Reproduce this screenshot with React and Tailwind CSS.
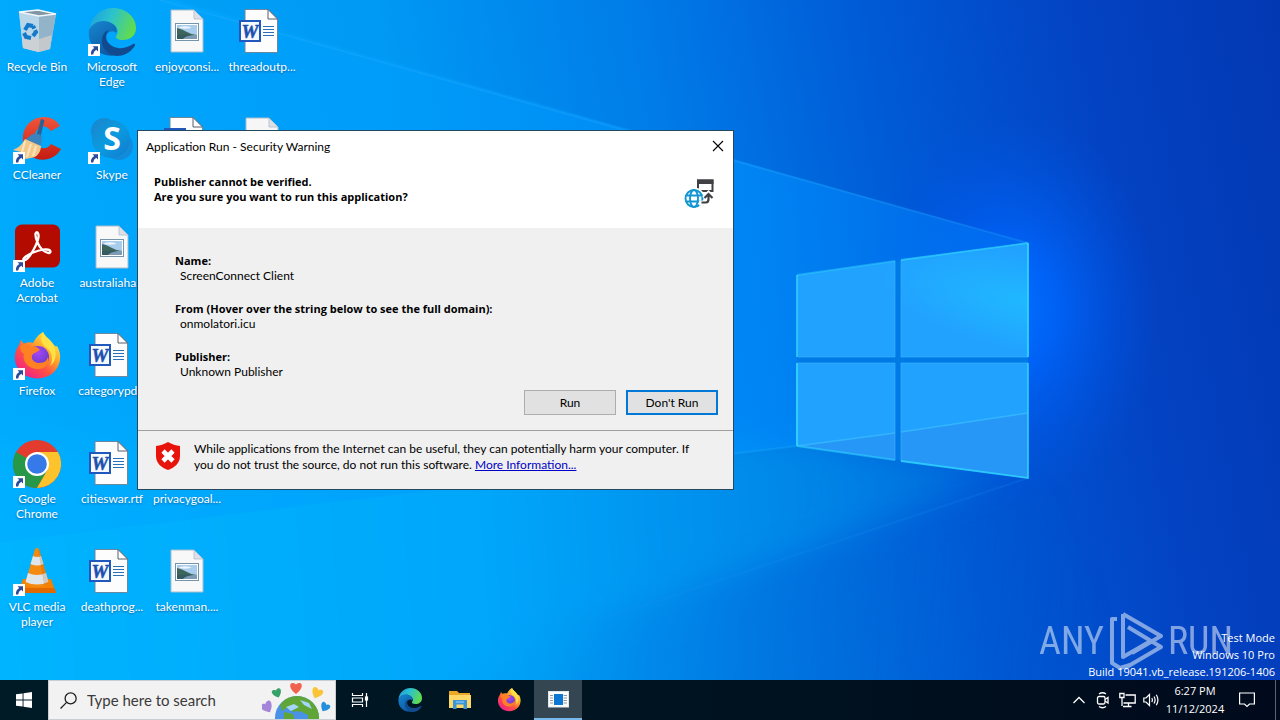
import React from "react";

function Wallpaper() {
  return (
    <svg
      className="absolute inset-0 h-full w-full"
      viewBox="0 0 1280 680"
      preserveAspectRatio="xMidYMid slice"
      aria-hidden="true"
    >
      <defs>
        <linearGradient id="sky" x1="0" y1="0.1" x2="1" y2="0">
          <stop offset="0" stopColor="#00a6f8" />
          <stop offset="0.3" stopColor="#0099f4" />
          <stop offset="0.5" stopColor="#007ce8" />
          <stop offset="0.68" stopColor="#005ad6" />
          <stop offset="0.85" stopColor="#0342c2" />
          <stop offset="1" stopColor="#0338b2" />
        </linearGradient>
        <linearGradient id="beam" gradientUnits="userSpaceOnUse" x1="0" y1="0" x2="1028" y2="0">
          <stop offset="0" stopColor="#00acff" />
          <stop offset="0.5" stopColor="#009afc" />
          <stop offset="0.75" stopColor="#0090ff" />
          <stop offset="1" stopColor="#0070f0" />
        </linearGradient>
        <linearGradient id="floor" gradientUnits="userSpaceOnUse" x1="0" y1="600" x2="1100" y2="520">
          <stop offset="0" stopColor="#00b4ff" />
          <stop offset="0.45" stopColor="#00a6fa" />
          <stop offset="0.75" stopColor="#0084e6" />
          <stop offset="1" stopColor="#0062d6" stopOpacity="0.6" />
        </linearGradient>
        <linearGradient id="dusk" gradientUnits="userSpaceOnUse" x1="300" y1="560" x2="1100" y2="620">
          <stop offset="0" stopColor="#00b0ff" />
          <stop offset="0.3" stopColor="#009ef4" />
          <stop offset="0.6" stopColor="#0074de" />
          <stop offset="1" stopColor="#0048c4" stopOpacity="0" />
        </linearGradient>
        <radialGradient
          id="glow"
          gradientUnits="userSpaceOnUse"
          cx="0"
          cy="0"
          r="1"
          gradientTransform="translate(1010 310) scale(150 200)"
        >
          <stop offset="0" stopColor="#0070ff" />
          <stop offset="0.3" stopColor="#0064fa" stopOpacity="0.9" />
          <stop offset="1" stopColor="#0050e0" stopOpacity="0" />
        </radialGradient>
        <radialGradient
          id="pane"
          gradientUnits="userSpaceOnUse"
          cx="0"
          cy="0"
          r="1"
          gradientTransform="translate(1028 303) rotate(12) scale(150 50)"
        >
          <stop offset="0" stopColor="#20b8ff" />
          <stop offset="1" stopColor="#21a2ff" />
        </radialGradient>
        <filter id="soft" x="-15%" y="-25%" width="130%" height="150%">
          <feGaussianBlur stdDeviation="16" />
        </filter>
      </defs>
      <rect width="1280" height="680" fill="url(#sky)" />
      <rect width="1280" height="680" fill="url(#glow)" />
      <path d="M-80 440 L797 440 L1010 470 L600 640 L480 780 L-80 780Z" fill="url(#floor)" filter="url(#soft)" />
      <path d="M1028 490 L560 625 L300 780 L1200 780Z" fill="url(#dusk)" opacity="0.75" filter="url(#soft)" />
      <path d="M-20 -20 L140 -10 L1028 243 L1028 478 L797 446 L-20 545Z" fill="url(#beam)" opacity="0.6" />
      <path d="M160 0 L1028 243" stroke="#35b4ff" strokeWidth="2" opacity="0.22" />
      <path d="M560 474 L797 446" stroke="#2cc4ff" strokeWidth="2" opacity="0.2" />
      <path d="M1028 478 L600 620" stroke="#2090f0" strokeWidth="2" opacity="0.18" />
      <path d="M797 275 L1028 243 L1028 478 L797 446Z" fill="#007ae6" />
      <g fill="url(#pane)">
        <path d="M797 275 L895 261 L895 357 L797 357Z" />
        <path d="M901 260 L1028 243 L1028 357 L901 357Z" />
        <path d="M797 363 L895 363 L895 460 L797 446Z" />
        <path d="M901 363 L1028 363 L1028 478 L901 461Z" />
      </g>
      <path d="M797 446 L895 433 L895 460Z M901 432 L1028 413 L1028 478 L901 461Z" fill="#2a90f2" opacity="0.6" />
      <path d="M797 446 L895 433 M901 432 L1028 413" stroke="#3fc4ff" strokeWidth="1.5" opacity="0.6" />
      <g fill="none" stroke="#3fb4ff" strokeWidth="1" opacity="0.6">
        <path d="M895 261 V357 H798 M901 260 V357 H1028 M797 363 H895 V460 M1028 363 H901 V461" />
      </g>
      <g fill="none" stroke="#30d4ff" strokeWidth="1.8">
        <path d="M895 261 L797 275" opacity="0.45" />
        <path d="M797 275 V357" opacity="0.85" />
        <path d="M901 260 L1028 243" opacity="0.7" />
        <path d="M1028 243 V357 M797 363 V446" />
        <path d="M797 446 L895 460" opacity="0.55" />
        <path d="M1028 363 V478 L901 461" opacity="0.85" />
      </g>
    </svg>
  );
}

function ShortcutArrow() {
  return (
    <svg className="absolute bottom-0 left-0 h-3 w-3" viewBox="0 0 12 12" aria-hidden="true">
      <rect width="12" height="12" fill="#fff" />
      <path d="M4.5 2.2 H10 V7.6 L8.2 5.8 Q5.4 7.2 5.2 10.6 H3 Q2.4 6.2 6.3 4Z" fill="#2a4b9b" />
    </svg>
  );
}

function RecycleBin() {
  return (
    <svg viewBox="0 0 48 48" className="h-12 w-12" aria-hidden="true">
      <path d="M6 4 L25 2 L43 6 L37 41 L25 44 L10 40Z" fill="#b4cfe0" />
      <path d="M6 4 L26 7 L26 44 L10 40Z" fill="#b9d6e9" />
      <path d="M26 7 L43 6 L37 41 L26 44Z" fill="#93b3c8" />
      <path d="M9 27 L26 31 L39 27 L37 41 L26 44 L10 40Z" fill="#d2cfcd" opacity="0.75" />
      <path d="M6 4 L25 2 L43 6 L26 8Z" fill="#8096a5" stroke="#eef6fa" strokeWidth="1.3" />
      <g fill="none" stroke="#1479c9" strokeWidth="4">
        <path d="M12 22 L15 17 L20 18" />
        <path d="M20 18 L23 24 L20 28" strokeDasharray="3 1.500 20" />
        <path d="M18 30 L13 29 L11 25" />
      </g>
    </svg>
  );
}

function EdgeLogo({ className }) {
  return (
    <svg viewBox="0 0 48 48" className={className} aria-hidden="true">
      <defs>
        <linearGradient id="edgeTop" x1="0" y1="0.2" x2="1" y2="0.5">
          <stop offset="0" stopColor="#1c9fe0" />
          <stop offset="0.45" stopColor="#2bc3cd" />
          <stop offset="1" stopColor="#62dc4c" />
        </linearGradient>
        <linearGradient id="edgeLeft" x1="0" y1="0" x2="0.6" y2="1">
          <stop offset="0" stopColor="#1686cf" />
          <stop offset="1" stopColor="#0c59a4" />
        </linearGradient>
      </defs>
      <path d="M1 22 C3 8 13 0 25 0 C38 0 48 9 48 20 C48 28 42 32 35 32 C30 32 27 30 28 28 C31 25 30 20 26 17 C19 11 7 13 1 22Z" fill="url(#edgeTop)" />
      <path d="M1 22 C5 13 17 10 25 16 C28 18 30 22 28 25 C25 21 17 24 17 32 C17 40 24 47 33 46 C16 52 -1 41 1 22Z" fill="url(#edgeLeft)" />
      <path d="M21 22 C15 29 19 38 30 40 C36 41 42 38 45 36 C47 35 48 37 46 39 C42 45 35 48 29 48 C19 47 13 39 14 32 C14 27 17 23 21 22Z" fill="#124a8f" />
    </svg>
  );
}

function PictureFile() {
  return (
    <svg viewBox="0 0 48 48" className="h-12 w-12" aria-hidden="true">
      <path d="M8 2 H31 L40 11 V44 H8Z" fill="#f8f8f9" stroke="#a9bccb" strokeWidth="1" />
      <path d="M31 2 V11 H40Z" fill="#dde0e8" stroke="#b4bcc8" strokeWidth="0.8" />
      <rect x="12.5" y="15.5" width="23" height="17" fill="#fff" stroke="#7494ab" />
      <rect x="14" y="17" width="20" height="14" fill="#a8cdec" />
      <path d="M14 20 Q19 21 24 24 T34 27 V28 H14Z" fill="#3e655c" />
      <path d="M14 27 L34 27 V31 H14Z" fill="#7c9cb4" />
      <path d="M14 27 Q22 26 30 27 Q22 28 20 31 H14Z" fill="#345c60" />
      <ellipse cx="22" cy="19.5" rx="6" ry="1.2" fill="#fff" opacity="0.8" />
    </svg>
  );
}

function BlankFile() {
  return (
    <svg viewBox="0 0 48 48" className="h-12 w-12" aria-hidden="true">
      <path d="M8 2 H31 L40 11 V44 H8Z" fill="#f6f6f7" stroke="#a9bccb" />
      <path d="M31 2 V11 H40Z" fill="#dde0e8" stroke="#b4bcc8" strokeWidth="0.8" />
    </svg>
  );
}

function WordFile() {
  return (
    <svg viewBox="0 0 48 48" className="h-12 w-12" aria-hidden="true">
      <path d="M7 1.500 H30 L39.500 11 V44.500 H7Z" fill="#fdfdfd" stroke="#6c87a0" strokeWidth="1" />
      <path d="M30 1.500 V11 H39.500Z" fill="#fff" stroke="#54606c" strokeWidth="1" />
      <path d="M25 18.500 H36 M25 21.500 H36 M25 24.500 H36 M25 27.500 H36" stroke="#2a6fb8" strokeWidth="1.2" />
      <rect x="1" y="12" width="22" height="22" fill="#2058be" />
      <rect x="3" y="14" width="18" height="18" fill="#f5f8fd" />
      <text x="12" y="29.500" textAnchor="middle" fontFamily="'Liberation Serif', serif" fontWeight="700" fontStyle="italic" fontSize="19" fill="#1c4fae" stroke="#1c4fae" strokeWidth="0.5">
        W
      </text>
    </svg>
  );
}

function CCleanerLogo() {
  return (
    <svg viewBox="0 0 48 48" className="h-12 w-12" aria-hidden="true">
      <defs>
        <linearGradient id="ccRed" x1="0" y1="0" x2="0" y2="1">
          <stop offset="0" stopColor="#f0553b" />
          <stop offset="1" stopColor="#c41b12" />
        </linearGradient>
      </defs>
      <path d="M47 10 C41 -1 25 -2 16 7 C7 16 8 33 18 40 C27 47 42 44 48 33 L38 28 C35 33 28 34 24 29 C20 24 21 16 26 12 C31 9 35 11 38 15Z" fill="url(#ccRed)" />
      <path d="M28 3 L31.500 4 L27 23 L23 21Z" fill="#2a6294" />
      <path d="M18 19 Q24 16 29 20 L28 30 L12 24Z" fill="#3b83bd" />
      <path d="M12 23 L28 30 Q28 37 22 41 L13 43 Q8 41 8 36 L0 34 Q8 31 12 23Z" fill="#f3c98b" />
      <path d="M12 25 L9 36 M18 28 L14 41 M23 30 L20 40" stroke="#fae6c0" strokeWidth="2" />
    </svg>
  );
}

function SkypeLogo() {
  return (
    <svg viewBox="0 0 48 48" className="h-12 w-12" aria-hidden="true">
      <defs>
        <linearGradient id="skype" x1="0" y1="0" x2="1" y2="1">
          <stop offset="0" stopColor="#1a86cc" />
          <stop offset="0.5" stopColor="#0a9be0" />
          <stop offset="1" stopColor="#1279cc" />
        </linearGradient>
      </defs>
      <circle cx="16" cy="15" r="13" fill="#168ad2" />
      <circle cx="31" cy="30" r="14" fill="#118bda" />
      <circle cx="23" cy="23" r="19" fill="url(#skype)" />
      <text x="24" y="34" textAnchor="middle" fontFamily="'Open Sans', sans-serif" fontWeight="700" fontSize="32" fill="#fff">
        S
      </text>
    </svg>
  );
}

function AcrobatLogo() {
  return (
    <svg viewBox="0 0 48 48" className="h-12 w-12" aria-hidden="true">
      <rect x="2" y="0.500" width="45" height="43" rx="7" fill="#b30b00" />
      <path
        d="M11 34 C14 31 21 28 26 26.500 C31 25 37 25 37.500 27.500 C37.500 30.500 32 28.500 29 25.500 C25 21.500 22 13 22.500 9.500 C23.500 6.500 26 9 25.500 13 C24.500 20 18 31 14.500 34.500 C12 37 9 36 11 34Z"
        fill="none"
        stroke="#fff"
        strokeWidth="2.300"
        strokeLinejoin="round"
      />
    </svg>
  );
}

function FirefoxLogo({ className }) {
  return (
    <svg viewBox="0 0 48 48" className={className} aria-hidden="true">
      <defs>
        <linearGradient id="fxBody" x1="0.9" y1="0.1" x2="0.2" y2="0.95">
          <stop offset="0" stopColor="#fff44f" />
          <stop offset="0.35" stopColor="#ffa52a" />
          <stop offset="0.65" stopColor="#ff4f44" />
          <stop offset="1" stopColor="#f0208c" />
        </linearGradient>
        <radialGradient id="fxGlobe" cx="0.5" cy="0.3" r="0.7">
          <stop offset="0" stopColor="#a746f4" />
          <stop offset="1" stopColor="#5b3bc6" />
        </radialGradient>
      </defs>
      <path d="M30 0 C32 5 37 7 40 12 C42 14 43 15 44 14 C49 22 48 32 42 39 C34 48 18 49 9 41 C0 33 0 21 6 13 L8 8 L11 12 C14 10 17 10 20 11 C22 7 26 2 30 0Z" fill="url(#fxBody)" />
      <circle cx="25" cy="25" r="11" fill="url(#fxGlobe)" />
      <path d="M7 15 C10 10 15 10 18 15 C20 14 24 14 27 18 L20 22 C17 25 20 31 26 31 C32 31 34 28 35 25 C37 33 30 38 23 37 C14 36 9 28 11 22 C8 20 7 18 7 15Z" fill="#ff8124" />
      <path d="M30 0 C26 7 29 13 34 16 C40 21 40 29 37 34 C44 29 44 20 40 12 C37 7 32 5 30 0Z" fill="#ffe045" />
    </svg>
  );
}

function ChromeLogo() {
  return (
    <svg viewBox="0 0 48 48" className="h-12 w-12" aria-hidden="true">
      <circle cx="24" cy="24" r="24" fill="#e33b2e" />
      <path d="M24 24 L3.200 12 A24 24 0 0 0 24 48 L34.400 30Z" fill="#279847" />
      <path d="M24 12 H44.900 A24 24 0 0 1 24 48 L34.400 30Z" fill="#fcc32c" />
      <circle cx="24" cy="24" r="12" fill="#fff" />
      <circle cx="24" cy="24" r="9.800" fill="#3679e8" />
    </svg>
  );
}

function VlcLogo() {
  return (
    <svg viewBox="0 0 48 48" className="h-12 w-12" aria-hidden="true">
      <path d="M10 31 H38 L43 45 H5Z" fill="#f48200" />
      <path d="M5 45 L7 40 H41.500 L43 45Z" fill="#e06a00" />
      <path d="M22 1 Q24 -1 26 1 L36 36 Q24 43 12 36Z" fill="#f58a10" />
      <path d="M20 8 Q24 10 28 8 L30.500 16 Q24 19 17.500 16Z" fill="#dfe6e9" />
      <path d="M15 25 Q24 29 33 25 L35.500 34 Q24 39 12.500 34Z" fill="#dfe6e9" />
      <path d="M25 1 L31 37 L36 36 L26 1Z" fill="#b84d00" opacity="0.2" />
    </svg>
  );
}

const desktopRows = [
  [
    { label: "Recycle Bin", icon: <RecycleBin /> },
    { label: "Microsoft Edge", icon: <EdgeLogo className="h-12 w-12" />, shortcut: true },
    { label: "enjoyconsi...", icon: <PictureFile /> },
    { label: "threadoutp...", icon: <WordFile /> },
  ],
  [
    { label: "CCleaner", icon: <CCleanerLogo />, shortcut: true },
    { label: "Skype", icon: <SkypeLogo />, shortcut: true },
    { label: "", icon: <WordFile /> },
    { label: "", icon: <BlankFile /> },
  ],
  [
    { label: "Adobe Acrobat", icon: <AcrobatLogo />, shortcut: true },
    { label: "australiaha...", icon: <PictureFile /> },
    null,
    null,
  ],
  [
    { label: "Firefox", icon: <FirefoxLogo className="h-12 w-12" />, shortcut: true },
    { label: "categorypd...", icon: <WordFile /> },
    null,
    null,
  ],
  [
    { label: "Google Chrome", icon: <ChromeLogo />, shortcut: true },
    { label: "citieswar.rtf", icon: <WordFile /> },
    { label: "privacygoal...", icon: <BlankFile /> },
    null,
  ],
  [
    { label: "VLC media player", icon: <VlcLogo />, shortcut: true },
    { label: "deathprog...", icon: <WordFile /> },
    { label: "takenman....", icon: <PictureFile /> },
    null,
  ],
];

function DesktopIcon({ item }) {
  return (
    <div className="flex h-[108px] flex-col items-center gap-[3px] pr-px pt-2">
      <div className="relative h-12 w-12">
        {item.icon}
        {item.shortcut && <ShortcutArrow />}
      </div>
      <span className="px-1 text-center text-[12px] leading-[15px] text-white [text-shadow:0_1px_2px_rgba(0,40,90,0.5)]">
        {item.label}
      </span>
    </div>
  );
}

function RunOnlineIcon() {
  return (
    <svg className="mt-1 h-8 w-8" viewBox="0 0 32 32" aria-hidden="true">
      <rect x="14" y="2.500" width="14.500" height="10.500" fill="#fff" stroke="#3f3f44" strokeWidth="2" />
      <path d="M13 1.500 H29.500 V6 H13Z" fill="#3f3f44" />
      <circle cx="10" cy="20.500" r="11" fill="#fff" />
      <g fill="none" stroke="#1295d3" strokeWidth="1.900">
        <circle cx="10" cy="20.500" r="8.500" />
        <ellipse cx="10" cy="20.500" rx="4" ry="8.500" />
        <path d="M2.500 17.500 H17.500 M2.500 23.500 H17.500" />
      </g>
      <path d="M15 25 H22 Q24.500 25 24.500 21 V17 M20 20 L24.500 15.500 L29 20" fill="none" stroke="#fff" strokeWidth="5" />
      <path d="M17.500 24.500 H22 Q24.500 24.500 24.500 21 V17 M20.500 20 L24.500 16 L28.500 20" fill="none" stroke="#3f3f44" strokeWidth="2.200" />
    </svg>
  );
}

function ShieldIcon() {
  return (
    <svg className="mt-[11px] h-7 w-6 shrink-0" viewBox="0 0 24 28" aria-hidden="true">
      <path d="M12 0 C16 2.500 20 3.500 24 4 V14 C24 21 19 25.500 12 28 C5 25.500 0 21 0 14 V4 C4 3.500 8 2.500 12 0Z" fill="#e8140c" />
      <path d="M7 9 L17 19 M17 9 L7 19" stroke="#fff" strokeWidth="4.600" />
    </svg>
  );
}

const details = [
  ["Name:", "ScreenConnect Client"],
  ["From (Hover over the string below to see the full domain):", "onmolatori.icu"],
  ["Publisher:", "Unknown Publisher"],
];

function SecurityDialog() {
  return (
    <section
      role="dialog"
      aria-labelledby="dialog-title"
      className="absolute left-[137px] top-[130px] w-[597px] border border-[#23485f] bg-[#f0f0f0] text-[12px] leading-[15px] text-black"
    >
      <div className="bg-white">
        <div className="flex h-[30px] items-center justify-between pl-2">
          <h1 id="dialog-title">Application Run - Security Warning</h1>
          <button type="button" aria-label="Close" className="flex h-7 w-[30px] items-center justify-center">
            <svg className="h-3 w-3" viewBox="0 0 12 12" aria-hidden="true">
              <path d="M1 1 L11 11 M11 1 L1 11" stroke="#000" strokeWidth="1.100" />
            </svg>
          </button>
        </div>
        <div className="flex h-[67px] items-start justify-between pl-4 pr-[17px] pt-[13px]">
          <p className="font-['Open_Sans','Noto_Sans',sans-serif] text-[11px] font-bold">
            Publisher cannot be verified.
            <br />
            Are you sure you want to run this application?
          </p>
          <RunOnlineIcon />
        </div>
      </div>
      <dl className="flex flex-col gap-[18px] pl-[37px] pt-[25px]">
        {details.map(([term, value]) => (
          <div key={term}>
            <dt className="font-['Open_Sans','Noto_Sans',sans-serif] text-[11px] font-bold">{term}</dt>
            <dd className="pl-[5px]">{value}</dd>
          </div>
        ))}
      </dl>
      <div className="flex justify-end gap-2.5 pb-[15px] pr-[15px] pt-[11px]">
        <button type="button" className="h-[25px] w-[92px] border border-[#adadad] bg-[#e1e1e1]">
          Run
        </button>
        <button type="button" className="h-[25px] w-[92px] border-2 border-[#0078d7] bg-[#e1e1e1]">
          Don't Run
        </button>
      </div>
      <div className="flex h-[59px] gap-[14px] border-t border-[#a0a0a0] pl-[18px] pr-7">
        <ShieldIcon />
        <p className="pt-2.5 leading-4">
          While applications from the Internet can be useful, they can potentially harm your computer. If
          <br />
          you do not trust the source, do not run this software.{" "}
          <a href="#more" className="text-[#0000c8] underline">
            More Information...
          </a>
        </p>
      </div>
    </section>
  );
}

function Watermark() {
  return (
    <div className="absolute bottom-[9px] right-[47px] flex items-center gap-1 text-white opacity-50">
      <span className="font-['Roboto_Condensed','Liberation_Sans_Narrow','Liberation_Sans',sans-serif] text-[38px] leading-[60px]">
        ANY
      </span>
      <svg className="h-[60px] w-14" viewBox="0 0 56 60" fill="none" stroke="currentColor" strokeWidth="4" strokeLinejoin="round" aria-hidden="true">
        <path d="M9 8 H4 V52 L12 57 L22 54" />
        <path d="M15 3 L53 25 L24 42" />
        <path d="M15 3 V46 L41 31" />
        <path d="M20 16 L53 36 L17 57" />
      </svg>
      <span className="font-['Roboto_Condensed','Liberation_Sans_Narrow','Liberation_Sans',sans-serif] text-[38px] leading-[60px]">
        RUN
      </span>
    </div>
  );
}

function SearchArt() {
  return (
    <svg className="h-[38px] w-[70px] shrink-0" viewBox="0 0 70 38" aria-hidden="true">
      <defs>
        <path id="heart" d="M0 6 C-7 1 -7 -5 -3.500 -5 C-1 -5 0 -3.500 0 -3 C0 -3.500 1 -5 3.500 -5 C7 -5 7 1 0 6Z" />
        <clipPath id="earth">
          <circle cx="35" cy="37" r="22" />
        </clipPath>
      </defs>
      <circle cx="35" cy="37" r="22" fill="#4a92e8" />
      <g clipPath="url(#earth)">
        <path d="M18 24 L26 15 L40 12 L50 19 L57 30 V40 H46 L42 35 L36 30 L31 31 L28 25 L20 30Z" fill="#5fa636" />
        <path d="M22 31 L31 33 L33 40 H22Z" fill="#5fa636" />
        <path d="M24 26 L32 23 L37 26 L29 30Z M38 19 L47 22 L50 28 L42 24Z" fill="#a5d6f7" />
        <path d="M38 30 L46 34 V40 H36Z" fill="#4a92e8" />
      </g>
      <use href="#heart" transform="translate(34 7)" fill="#f0624d" />
      <use href="#heart" transform="translate(15 12) rotate(-20) scale(0.800)" fill="#36a269" />
      <use href="#heart" transform="translate(55 12) rotate(25) scale(0.950)" fill="#fbc437" />
      <use href="#heart" transform="translate(5 26) rotate(-30)" fill="#a485d8" />
      <use href="#heart" transform="translate(63 26) rotate(30) scale(0.800)" fill="#2490dc" />
    </svg>
  );
}

function Taskbar() {
  return (
    <footer className="flex h-10 items-stretch bg-[linear-gradient(90deg,#001a26,#00121f_60%,#000a1c)] text-white">
      <button type="button" aria-label="Start" className="flex w-12 items-center justify-center">
        <svg className="h-4 w-4" viewBox="0 0 16 16" fill="#fff" aria-hidden="true">
          <path d="M0 2.300 L6.600 1.400 V7.500 H0Z M7.500 1.200 L16 0 V7.500 H7.500Z M0 8.500 H6.600 V14.600 L0 13.700Z M7.500 8.500 H16 V16 L7.500 14.800Z" />
        </svg>
      </button>
      <label className="flex w-72 items-center border border-[#c9ced2] bg-[#f2f2f2] pl-[11px] pr-[3px]">
        <svg className="h-[17px] w-[17px] shrink-0" viewBox="0 0 16 16" fill="none" stroke="#1d1d1d" strokeWidth="1.200" aria-hidden="true">
          <circle cx="10" cy="6" r="5.200" />
          <path d="M6.200 9.800 L0.500 15.500" />
        </svg>
        <input
          type="text"
          aria-label="Search"
          placeholder="Type here to search"
          className="ml-2.5 min-w-0 flex-1 bg-transparent text-[15px] leading-5 text-black outline-none placeholder:text-[#3a3a3a]"
        />
        <SearchArt />
      </label>
      <button type="button" aria-label="Task View" className="flex w-12 items-center justify-center">
        <svg className="h-[18px] w-[18px]" viewBox="0 0 18 18" fill="none" stroke="#fff" strokeWidth="1.200" aria-hidden="true">
          <path d="M1.500 2 V4.500 H11.500 V2 M1.500 16 V13.500 H11.500 V16 M1.500 7 H11.500 V11 H1.500Z M15.500 2 V16" />
          <rect x="14.500" y="6" width="2" height="3" fill="#fff" />
        </svg>
      </button>
      <button type="button" aria-label="Microsoft Edge" className="flex w-[52px] items-center justify-center">
        <EdgeLogo className="h-6 w-6" />
      </button>
      <button type="button" aria-label="File Explorer" className="flex w-12 items-center justify-center">
        <svg className="h-[22px] w-6" viewBox="0 0 24 22" aria-hidden="true">
          <path d="M1 2 H9 L11 4 H22 V19 H1Z" fill="#e9a825" />
          <path d="M1 6 H23 V19 H1Z" fill="#ffd766" />
          <path d="M5 11 H19 V20 H15.500 V15.500 H8.500 V20 H5Z" fill="#3b96d9" />
          <path d="M8 13 H16" stroke="#8bc8f2" strokeWidth="1.200" />
        </svg>
      </button>
      <button type="button" aria-label="Firefox" className="flex w-[50px] items-center justify-center">
        <FirefoxLogo className="h-6 w-6" />
      </button>
      <button
        type="button"
        aria-label="Application Run"
        className="flex w-12 items-center justify-center border-b-2 border-[#76b9ed] bg-[#334651]"
      >
        <svg className="mt-px h-[17px] w-[21px]" viewBox="0 0 21 17" aria-hidden="true">
          <rect x="0.500" y="0.500" width="20" height="15.500" fill="#fff" stroke="#dfe6ea" />
          <path d="M2 4.500 H5 M2 7 H5 M2 9.500 H5 M2 12 H5 M15.500 4.500 H19 M15.500 7 H19 M15.500 9.500 H19 M15.500 12 H19" stroke="#8f989e" />
          <rect x="6" y="3" width="9" height="11" fill="#0c78d4" />
        </svg>
      </button>
      <div className="ml-auto flex items-center">
        <button type="button" aria-label="Show hidden icons" className="flex w-6 justify-center">
          <svg className="h-2 w-3" viewBox="0 0 12 8" fill="none" stroke="#fff" strokeWidth="1.300" aria-hidden="true">
            <path d="M0.500 7 L6 1.500 L11.500 7" />
          </svg>
        </button>
        <button type="button" aria-label="Meet Now" className="flex w-6 justify-center">
          <svg className="h-[18px] w-3.5" viewBox="0 0 14 18" fill="none" stroke="#fff" strokeWidth="1.300" aria-hidden="true">
            <rect x="1.500" y="5.500" width="7.500" height="7.500" rx="1.500" />
            <path d="M9 8.500 L12 6.500 V12 L9 10 M3 3 Q6.500 0.500 10 3 M3 15.500 Q6.500 18 10 15.500" />
          </svg>
        </button>
        <button type="button" aria-label="Network" className="flex w-6 justify-center">
          <svg className="h-4 w-[17px]" viewBox="0 0 17 16" fill="none" stroke="#fff" strokeWidth="1.300" aria-hidden="true">
            <path d="M6.500 3 H16.200 V11 H4.500 M4 14.500 H12.500 M9.500 11 V14.500 M0.800 1.500 H5 V5.500 H0.800Z M3 5.500 V14" />
          </svg>
        </button>
        <button type="button" aria-label="Volume" className="flex w-6 justify-center">
          <svg className="h-3.5 w-[17px]" viewBox="0 0 17 14" fill="none" stroke="#fff" strokeWidth="1.200" aria-hidden="true">
            <path d="M0.800 5 H3 L6.500 1.500 V12.500 L3 9 H0.800Z M8.800 5 Q10 7 8.800 9 M11 3.500 Q13.200 7 11 10.500 M13.300 1.800 Q16.600 7 13.300 12.200" />
          </svg>
        </button>
        <time className="w-16 text-center font-['Open_Sans','Noto_Sans',sans-serif] text-[11px] leading-[18px]">
          6:27 PM
          <br />
          11/12/2024
        </time>
        <button type="button" aria-label="Notifications" className="flex w-10 justify-center">
          <svg className="h-4 w-4" viewBox="0 0 16 16" fill="none" stroke="#fff" strokeWidth="1.200" aria-hidden="true">
            <path d="M0.600 1 H15.400 V12 H10.500 L8 14.500 L5.500 12 H0.600Z" />
          </svg>
        </button>
        <button type="button" aria-label="Show desktop" className="ml-2 h-10 w-[5px] border-l border-[#5b6672]" />
      </div>
    </footer>
  );
}

export default function App() {
  return (
    <div className="flex min-h-screen flex-col font-['Lato','Open_Sans',sans-serif]">
      <main className="relative flex-1 overflow-hidden bg-[#0090f4]">
        <Wallpaper />
        <div className="relative grid w-[300px] grid-cols-4">
          {desktopRows.flat().map((item, index) =>
            item ? <DesktopIcon key={index} item={item} /> : <div key={index} />
          )}
        </div>
        <Watermark />
        <div className="absolute bottom-0 right-[5px] text-right font-['Open_Sans','Noto_Sans',sans-serif] text-[11px] leading-[17px] text-white">
          <p>Test Mode</p>
          <p>Windows 10 Pro</p>
          <p>Build 19041.vb_release.191206-1406</p>
        </div>
        <SecurityDialog />
      </main>
      <Taskbar />
    </div>
  );
}
